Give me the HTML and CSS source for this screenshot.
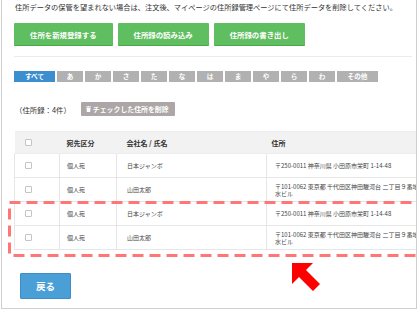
FILE: index.html
```html
<!DOCTYPE html>
<html lang="ja">
<head>
    <meta charset="UTF-8">
    <meta name="viewport" content="width=device-width, initial-scale=1.0">
    <title>住所録</title>
    <link rel="stylesheet" href="styles.css">
</head>
<body>
    <div class="frame">
        <p class="notice">住所データの保管を望まれない場合は、注文後、マイページの住所録管理ページにて住所データを削除してください。</p>

        <div class="actions">
            <button class="btn-green">住所を新規登録する</button>
            <button class="btn-green">住所録の読み込み</button>
            <button class="btn-green">住所録の書き出し</button>
        </div>

        <hr class="divider">

        <div class="tabs">
            <span class="tab tab-wide active">すべて</span>
            <span class="tab">あ</span>
            <span class="tab">か</span>
            <span class="tab">さ</span>
            <span class="tab">た</span>
            <span class="tab">な</span>
            <span class="tab">は</span>
            <span class="tab">ま</span>
            <span class="tab">や</span>
            <span class="tab">ら</span>
            <span class="tab">わ</span>
            <span class="tab tab-wide">その他</span>
        </div>

        <div class="count-row">
            <span class="count">（住所録：4件）</span>
            <button class="btn-delete">
                <svg class="trash" viewBox="0 0 10 12" width="5" height="6">
                    <rect x="0" y="1" width="10" height="1.6" fill="#fff"/>
                    <rect x="3.5" y="0" width="3" height="1.5" fill="#fff"/>
                    <path d="M1 3.5 H9 L8.3 12 H1.7 Z" fill="#fff"/>
                </svg>チェックした住所を削除
            </button>
        </div>

        <table class="address-table">
            <colgroup>
                <col class="c-check">
                <col class="c-type">
                <col class="c-name">
                <col class="c-addr">
            </colgroup>
            <thead>
                <tr>
                    <th><span class="check"></span></th>
                    <th>宛先区分</th>
                    <th class="name">会社名 / 氏名</th>
                    <th class="addr">住所</th>
                </tr>
            </thead>
            <tbody>
                <tr>
                    <td><span class="check"></span></td>
                    <td>個人宛</td>
                    <td class="name">日本ジャンボ</td>
                    <td class="addr">〒250-0011 神奈川県 小田原市栄町 1-14-48</td>
                </tr>
                <tr>
                    <td><span class="check"></span></td>
                    <td>個人宛</td>
                    <td class="name">山田太郎</td>
                    <td class="addr">〒101-0062 東京都 千代田区神田駿河台 二丁目９番地 お茶の水ビル</td>
                </tr>
                <tr>
                    <td><span class="check"></span></td>
                    <td>個人宛</td>
                    <td class="name">日本ジャンボ</td>
                    <td class="addr">〒250-0011 神奈川県 小田原市栄町 1-14-48</td>
                </tr>
                <tr>
                    <td><span class="check"></span></td>
                    <td>個人宛</td>
                    <td class="name">山田太郎</td>
                    <td class="addr">〒101-0062 東京都 千代田区神田駿河台 二丁目９番地 お茶の水ビル</td>
                </tr>
            </tbody>
        </table>

        <button class="btn-back">戻る</button>

        <!-- 注目箇所の枠と矢印 -->
        <svg class="highlight" width="420" height="58">
            <rect x="1.5" y="1.5" width="440" height="53" fill="none" stroke="#ff7676" stroke-width="3" stroke-dasharray="11 6"/>
        </svg>
        <svg class="pointer" viewBox="0 0 28 28" width="28" height="28">
            <polygon points="0,0 21,0 14,7 28,21 21,28 7,14 0,21" fill="#ff0000"/>
        </svg>
    </div>
</body>
</html>
```

FILE: styles.css
```css
/* 全体 */
body {
    margin: 0;
    font-family: "Noto Sans CJK JP", sans-serif;
    color: #333;
    background-color: #fff;
}

.frame {
    position: relative;
    box-sizing: border-box;
    width: 416px;
    height: 309px;
    margin-left: 1px;
    padding: 2px 4px 0 12px;
    border: 1px solid #cfcfcf;
    border-top: none;
    overflow: hidden;
}

.notice {
    margin: 0;
    font-size: 7.22px;
    line-height: 10px;
    white-space: nowrap;
    padding-left: 1px;
}

.actions {
    display: flex;
    gap: 5px;
    margin-top: 11px;
}

.btn-green {
    height: 23px;
    padding: 0 16px;
    border: none;
    border-bottom: 1px solid #4ba94b;
    border-radius: 1px;
    background-color: #5fbe5f;
    color: #fff;
    font-family: inherit;
    font-size: 7.4px;
    font-weight: bold;
}

.divider {
    margin: 10px 0 0;
    border: none;
    border-top: 1px solid #ececec;
}

.tabs {
    display: flex;
    gap: 2px;
    margin-top: 14px;
}

.tab {
    width: 26px;
    height: 11px;
    line-height: 11px;
    text-align: center;
    background-color: #b1b1b1;
    color: #fff;
    font-size: 6.6px;
    font-weight: bold;
}

.tab-wide {
    width: 41px;
}

.tab.active {
    background-color: #3b8fcf;
}

.count-row {
    display: flex;
    align-items: center;
    margin-top: 20px;
}

.count {
    font-size: 7.4px;
    margin-left: 1px;
}

.btn-delete {
    display: flex;
    align-items: center;
    gap: 2px;
    height: 14px;
    margin-left: 10px;
    padding: 0 6px 0 5px;
    border: none;
    border-radius: 1px;
    background-color: #aca6a6;
    color: #fff;
    font-family: inherit;
    font-size: 6.9px;
    font-weight: bold;
}

/* 住所録テーブル */
.address-table {
    table-layout: fixed;
    width: 480px;
    margin-top: 15px;
    border-collapse: collapse;
    font-size: 6px;
    color: #444;
}

.c-check { width: 45px; }
.c-type { width: 57px; }
.c-name { width: 150px; }
.c-addr { width: 228px; }

.address-table th {
    height: 21px;
    padding: 0 0 0 7px;
    background-color: #f2f2f2;
    text-align: left;
    font-size: 7px;
    font-weight: bold;
    color: #333;
    border: 1px solid #ededed;
    border-left: none;
    border-right: none;
}

.address-table td {
    height: 23px;
    padding: 0 0 0 7px;
    line-height: 7px;
    border: 1px solid #e6e6e6;
}

.address-table .name {
    padding-left: 10px;
}

.address-table th.addr {
    padding-left: 5px;
}

.address-table td.addr {
    padding-left: 8px;
    padding-right: 55px;
}

.check {
    display: block;
    box-sizing: border-box;
    width: 7px;
    height: 7px;
    margin-left: 3px;
    border: 1px solid #c4c4c4;
    border-radius: 1px;
    background-color: #fff;
}

.btn-back {
    display: block;
    width: 51px;
    height: 26px;
    margin: 23px 0 0 6px;
    border: 1px solid #3f8dc5;
    border-radius: 1px;
    background-color: #4a9fd6;
    color: #fff;
    font-family: inherit;
    font-size: 9.5px;
    font-weight: bold;
}

.highlight {
    position: absolute;
    left: 6px;
    top: 201px;
}

.pointer {
    position: absolute;
    left: 290px;
    top: 263px;
}
```
